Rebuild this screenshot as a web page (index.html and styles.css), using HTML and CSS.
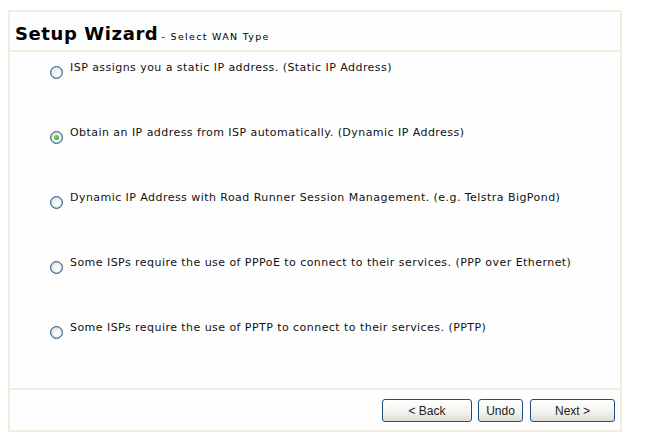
FILE: index.html
```html
<!DOCTYPE html>
<html>
<head>
<meta charset="utf-8">
<link rel="stylesheet" href="styles.css">
</head>
<body>
<div class="panel">
  <div class="header"><span class="title">Setup Wizard</span> <span class="subtitle">- Select WAN Type</span></div>
  <div class="options">
    <label class="row"><span class="radio"></span><span class="label">ISP assigns you a static IP address. (Static IP Address)</span></label>
    <label class="row"><span class="radio checked"></span><span class="label">Obtain an IP address from ISP automatically. (Dynamic IP Address)</span></label>
    <label class="row"><span class="radio"></span><span class="label">Dynamic IP Address with Road Runner Session Management. (e.g. Telstra BigPond)</span></label>
    <label class="row"><span class="radio"></span><span class="label">Some ISPs require the use of PPPoE to connect to their services. (PPP over Ethernet)</span></label>
    <label class="row"><span class="radio"></span><span class="label">Some ISPs require the use of PPTP to connect to their services. (PPTP)</span></label>
  </div>
  <div class="footer">
    <button class="btn btn-back">&lt; Back</button>
    <button class="btn btn-undo">Undo</button>
    <button class="btn btn-next">Next &gt;</button>
  </div>
</div>
</body>
</html>
```
FILE: styles.css
```css
html, body {
  margin: 0;
  padding: 0;
  background: #fff;
}
body {
  font-family: "DejaVu Sans", Verdana, sans-serif;
  color: #000;
}
.panel {
  margin: 10px 0 0 8px;
  width: 610px;
  border: 2px solid #f3eddd;
  background: #fefefe;
}
.header {
  height: 40px;
  border-bottom: 2px solid #f3eddd;
  padding: 11px 0 0 5px;
  box-sizing: border-box;
  line-height: 22px;
  font-size: 10px;
  white-space: nowrap;
}
.title {
  font-size: 18px;
  font-weight: bold;
  letter-spacing: 0.6px;
}
.subtitle {
  font-size: 9.5px;
  letter-spacing: 1.3px;
}
.options {
  height: 338px;
  padding-top: 14px;
  box-sizing: border-box;
  border-bottom: 2px solid #f3eddd;
}
.row {
  display: flex;
  align-items: flex-start;
  height: 65px;
  padding-left: 40px;
}
.radio {
  width: 11px;
  height: 11px;
  border: 1px solid #2b5f8e;
  border-radius: 50%;
  background: radial-gradient(circle at 60% 60%, #ffffff 0%, #f4f4f0 40%, #d7d7cf 100%);
  flex: none;
  position: relative;
  box-shadow: inset 0 0 0 0.5px #8fb0cc;
}
.radio.checked::after {
  content: "";
  position: absolute;
  left: 3px;
  top: 3px;
  width: 5px;
  height: 5px;
  border-radius: 50%;
  background: radial-gradient(circle at 40% 40%, #6fe06f, #1e9b1e);
}
.label {
  font-size: 11px;
  letter-spacing: 0.45px;
  margin-left: 7px;
  margin-top: -5px;
  line-height: 13px;
  color: #111;
}
.footer {
  height: 40px;
  display: flex;
  justify-content: flex-end;
  align-items: flex-start;
  padding: 9px 5px 0 0;
  box-sizing: border-box;
}
.btn {
  height: 23px;
  border: 1px solid #1f4f7f;
  border-radius: 3px;
  background: linear-gradient(#ffffff, #f2f2ee 60%, #dcdcd4);
  font-family: "Liberation Sans", Arial, sans-serif;
  font-size: 12px;
  color: #222;
  padding: 0;
  margin-left: 6px;
}
.btn-back { width: 90px; }
.btn-undo { width: 45px; }
.btn-next { width: 85px; margin-left: 7px; }
```
